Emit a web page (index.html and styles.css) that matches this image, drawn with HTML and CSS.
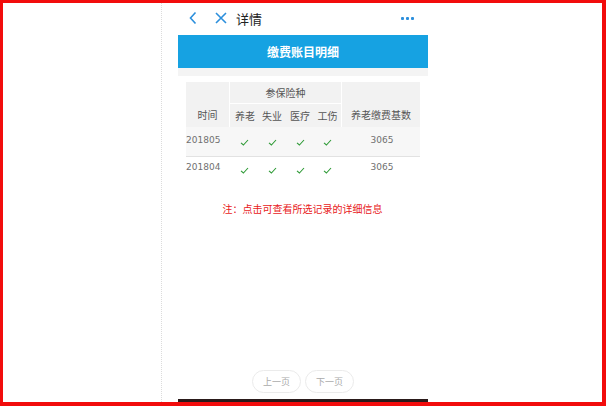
FILE: index.html
```html
<!DOCTYPE html>
<html lang="zh">
<head>
<meta charset="utf-8">
<link rel="stylesheet" href="styles.css">
</head>
<body>
<div class="frame">
  <div class="gutter"></div>
  <div class="phone">
    <div class="topbar">
      <svg class="ico back" width="10" height="14" viewBox="0 0 10 14"><polyline points="7.5,1.5 2.5,7 7.5,12.5" fill="none" stroke="#2c8fdc" stroke-width="1.6"/></svg>
      <svg class="ico close" width="14" height="14" viewBox="0 0 14 14"><path d="M2 2 L12 12 M12 2 L2 12" fill="none" stroke="#2c8fdc" stroke-width="1.6"/></svg>
      <span class="title">详情</span>
      <span class="more"><i></i><i></i><i></i></span>
    </div>
    <div class="banner">缴费账目明细</div>
    <div class="strip"></div>
    <div class="table">
      <div class="thead">
        <div class="th c-time">时间</div>
        <div class="th c-group">参保险种</div>
        <div class="th c-s1">养老</div>
        <div class="th c-s2">失业</div>
        <div class="th c-s3">医疗</div>
        <div class="th c-s4">工伤</div>
        <div class="th c-base">养老缴费基数</div>
      </div>
      <div class="tr odd">
        <div class="td t-time">201805</div>
        <div class="td t-chk"><svg width="9" height="7" viewBox="0 0 9 7"><polyline points="1,3.8 3.4,6 8,1" fill="none" stroke="#2e9a36" stroke-width="1.1"/></svg></div>
        <div class="td t-chk"><svg width="9" height="7" viewBox="0 0 9 7"><polyline points="1,3.8 3.4,6 8,1" fill="none" stroke="#2e9a36" stroke-width="1.1"/></svg></div>
        <div class="td t-chk"><svg width="9" height="7" viewBox="0 0 9 7"><polyline points="1,3.8 3.4,6 8,1" fill="none" stroke="#2e9a36" stroke-width="1.1"/></svg></div>
        <div class="td t-chk"><svg width="9" height="7" viewBox="0 0 9 7"><polyline points="1,3.8 3.4,6 8,1" fill="none" stroke="#2e9a36" stroke-width="1.1"/></svg></div>
        <div class="td t-base">3065</div>
      </div>
      <div class="tr">
        <div class="td t-time">201804</div>
        <div class="td t-chk"><svg width="9" height="7" viewBox="0 0 9 7"><polyline points="1,3.8 3.4,6 8,1" fill="none" stroke="#2e9a36" stroke-width="1.1"/></svg></div>
        <div class="td t-chk"><svg width="9" height="7" viewBox="0 0 9 7"><polyline points="1,3.8 3.4,6 8,1" fill="none" stroke="#2e9a36" stroke-width="1.1"/></svg></div>
        <div class="td t-chk"><svg width="9" height="7" viewBox="0 0 9 7"><polyline points="1,3.8 3.4,6 8,1" fill="none" stroke="#2e9a36" stroke-width="1.1"/></svg></div>
        <div class="td t-chk"><svg width="9" height="7" viewBox="0 0 9 7"><polyline points="1,3.8 3.4,6 8,1" fill="none" stroke="#2e9a36" stroke-width="1.1"/></svg></div>
        <div class="td t-base">3065</div>
      </div>
    </div>
    <div class="note">注：点击可查看所选记录的详细信息</div>
    <div class="spacer"></div>
    <div class="pager">
      <span class="btn">上一页</span>
      <span class="btn">下一页</span>
    </div>
    <div class="homebar"></div>
  </div>
</div>
</body>
</html>
```
FILE: styles.css
```css
* { box-sizing: border-box; }
html, body { margin: 0; padding: 0; }
body {
  width: 606px;
  height: 406px;
  overflow: hidden;
  font-family: "Noto Sans CJK SC", "Noto Sans", sans-serif;
}
.frame {
  width: 606px;
  height: 406px;
  border-style: solid;
  border-color: #f20c0c;
  border-width: 3px 4px 4px 3px;
  background: #fff;
  display: flex;
}
.gutter {
  width: 159px;
  border-right: 1px dotted #dcdcdc;
  flex: none;
}
.phone {
  width: 250px;
  margin-left: 16px;
  flex: none;
  display: flex;
  flex-direction: column;
}
.topbar {
  height: 32px;
  display: flex;
  align-items: center;
  padding-left: 10px;
  padding-bottom: 2px;
}
.ico { display: block; flex: none; }
.close { margin-left: 16px; }
.title {
  margin-left: 8px;
  font-size: 13px;
  color: #222;
  line-height: 1;
}
.more {
  margin-left: auto;
  margin-right: 14px;
  display: flex;
  gap: 2px;
}
.more i {
  display: block;
  width: 3px;
  height: 3px;
  border-radius: 1px;
  background: #2c8fdc;
}
.banner {
  height: 33px;
  background: #16a2e2;
  color: #fff;
  font-weight: bold;
  font-size: 12px;
  display: flex;
  align-items: center;
  justify-content: center;
}
.strip {
  height: 8px;
  background: #f4f4f4;
}
.table {
  margin: 6px 8px 0;
  width: 234px;
  font-size: 10px;
}
.thead {
  display: grid;
  grid-template-columns: 44px 28px 28px 28px 27px 79px;
  grid-template-rows: 22px 23px;
  color: #555;
}
.th {
  background: #f2f2f2;
  display: flex;
  align-items: center;
  justify-content: center;
}
.c-time {
  grid-column: 1;
  grid-row: 1 / 3;
  align-items: flex-end;
  padding-bottom: 5px;
  border-right: 1px solid #fff;
}
.c-group {
  grid-column: 2 / 6;
  grid-row: 1;
  border-bottom: 1px solid #fff;
}
.c-s1 { grid-column: 2; grid-row: 2; padding-left: 2px; }
.c-s2 { grid-column: 3; grid-row: 2; }
.c-s3 { grid-column: 4; grid-row: 2; }
.c-s4 { grid-column: 5; grid-row: 2; }
.c-base {
  grid-column: 6;
  grid-row: 1 / 3;
  align-items: flex-end;
  padding-bottom: 5px;
  border-left: 1px solid #fff;
}
.tr {
  display: grid;
  grid-template-columns: 44px 28px 28px 28px 27px 79px;
  height: 24px;
  color: #707070;
}
.tr.odd {
  height: 30px;
  background: #f7f7f7;
  border-bottom: 1px solid #e2e2e2;
}
.td {
  display: flex;
  align-items: center;
  justify-content: center;
  padding-bottom: 4px;
}
.t-chk { padding-bottom: 0; padding-top: 2px; }
.tr .t-time {
  justify-content: flex-start;
  font-family: "DejaVu Sans", sans-serif;
  font-size: 9px;
}
.tr .t-base {
  font-family: "DejaVu Sans", sans-serif;
  font-size: 9px;
  padding-left: 3px;
}
.note {
  margin-top: 20px;
  text-align: center;
  color: #e8191a;
  font-size: 10px;
  padding-right: 1px;
}
.spacer { flex: 1; }
.pager {
  display: flex;
  justify-content: center;
  gap: 4px;
  margin-bottom: 6px;
}
.btn {
  width: 49px;
  height: 23px;
  border: 1px solid #ebebeb;
  border-radius: 12px;
  color: #aaa;
  font-size: 9px;
  display: flex;
  align-items: center;
  justify-content: center;
}
.homebar {
  height: 3px;
  background: #2a1a1a;
}
```
